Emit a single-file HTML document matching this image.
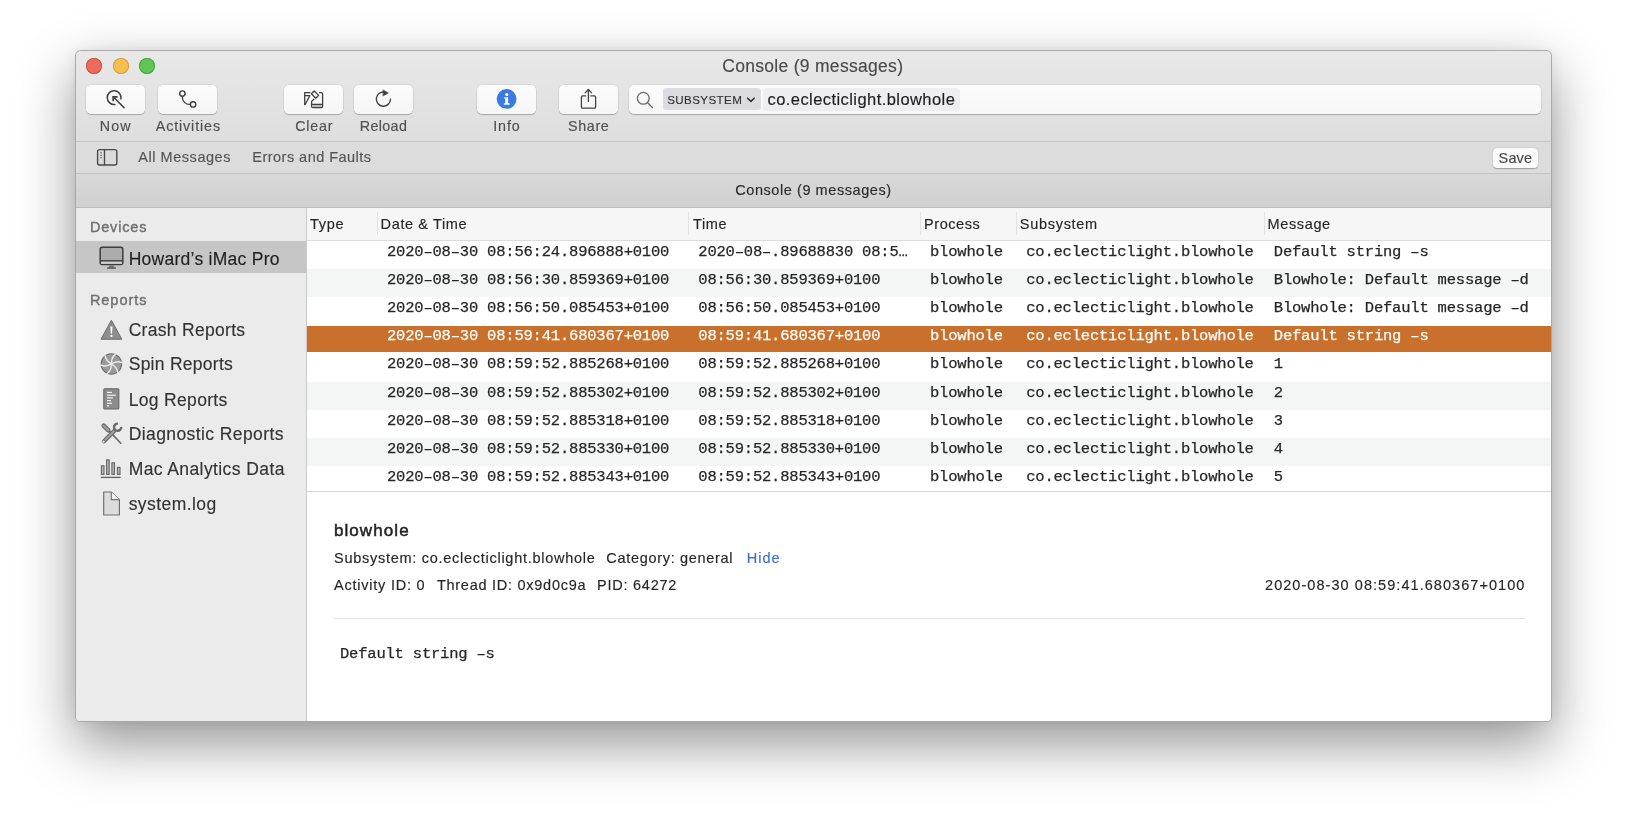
<!DOCTYPE html>
<html><head><meta charset="utf-8">
<style>
html,body{margin:0;padding:0;}
body{width:1627px;height:821px;background:#fff;position:relative;overflow:hidden;font-family:"Liberation Sans", sans-serif;}
.win{position:absolute;left:75px;top:50px;width:1477px;height:672px;box-sizing:border-box;border:1px solid rgba(0,0,0,0.28);border-radius:6px 6px 5px 5px;overflow:hidden;background:#ebebeb;
 box-shadow:0 22px 56px rgba(0,0,0,0.42), 0 0 14px rgba(0,0,0,0.06);}
.c{position:absolute;left:-76px;top:-51px;width:1627px;height:821px;}
.a{position:absolute;}
.t{position:absolute;line-height:1;white-space:pre;-webkit-text-stroke:0.15px currentColor;}
.m{-webkit-text-stroke:0.25px currentColor;}
.btn{position:absolute;top:85px;width:59px;height:29px;background:linear-gradient(#fbfbfb,#f6f6f6);border-radius:5px;box-shadow:0 1px 1px rgba(0,0,0,0.22),0 0 0 0.5px rgba(0,0,0,0.10);}
svg{position:absolute;overflow:visible;}
</style></head><body>
<div class="win"><div class="c">
 <!-- toolbar -->
 <div class="a" style="left:0;top:0;width:1627px;height:141px;background:linear-gradient(#e9e9e9 50px,#e6e6e6 70px,#dedede 141px);"></div>
 <div class="a" style="left:0;top:141px;width:1627px;height:1px;background:#c6c6c6;"></div>
 <div class="a" style="left:0;top:142px;width:1627px;height:31px;background:#dcdcdc;"></div>
 <div class="a" style="left:0;top:173px;width:1627px;height:1px;background:#c4c4c4;"></div>
 <div class="a" style="left:0;top:174px;width:1627px;height:33px;background:linear-gradient(#d8d8d8,#d1d1d1);"></div>
 <div class="a" style="left:0;top:207px;width:1627px;height:1px;background:#bdbdbd;"></div>
 <!-- sidebar -->
 <div class="a" style="left:0;top:208px;width:306px;height:620px;background:#ebebeb;"></div>
 <div class="a" style="left:76px;top:241px;width:230px;height:32px;background:#c6c6c6;"></div>
 <div class="a" style="left:306px;top:208px;width:1px;height:620px;background:#cbcbcb;"></div>
 <!-- table -->
 <div class="a" style="left:307px;top:208px;width:1330px;height:32px;background:#f6f6f6;"></div>
 <div class="a" style="left:307px;top:240px;width:1330px;height:1px;background:#dcdcdc;"></div>
 <div class="a" style="left:377px;top:212px;width:1px;height:23px;background:#e2e2e2;"></div>
 <div class="a" style="left:688px;top:212px;width:1px;height:23px;background:#e2e2e2;"></div>
 <div class="a" style="left:920px;top:212px;width:1px;height:23px;background:#e2e2e2;"></div>
 <div class="a" style="left:1016px;top:212px;width:1px;height:23px;background:#e2e2e2;"></div>
 <div class="a" style="left:1264px;top:212px;width:1px;height:23px;background:#e2e2e2;"></div>
 <div class="a" style="left:307px;top:241px;width:1330px;height:251px;background:#fff;"></div>
 <div class="a" style="left:307px;top:269.1px;width:1330px;height:28.1px;background:#f4f5f5;"></div>
 <div class="a" style="left:307px;top:381.5px;width:1330px;height:28.1px;background:#f4f5f5;"></div>
 <div class="a" style="left:307px;top:437.7px;width:1330px;height:28.1px;background:#f4f5f5;"></div>
 <div class="a" style="left:307px;top:325.6px;width:1330px;height:26.3px;background:#c8702c;"></div>
 <div class="a" style="left:307px;top:491px;width:1330px;height:1px;background:#d6d6d6;"></div>
 <!-- detail -->
 <div class="a" style="left:307px;top:492px;width:1330px;height:340px;background:#fff;"></div>
 <div class="a" style="left:334px;top:618px;width:1191px;height:1px;background:#e3e3e3;"></div>

 <!-- traffic lights -->
 <div class="a" style="left:86px;top:57.7px;width:16px;height:16px;border-radius:50%;background:#ed6a5e;box-shadow:inset 0 0 0 0.8px rgba(190,60,50,0.75);"></div>
 <div class="a" style="left:112.6px;top:57.7px;width:16px;height:16px;border-radius:50%;background:#f5bf4f;box-shadow:inset 0 0 0 0.8px rgba(200,140,40,0.75);"></div>
 <div class="a" style="left:139.4px;top:57.7px;width:16px;height:16px;border-radius:50%;background:#61c454;box-shadow:inset 0 0 0 0.8px rgba(50,150,45,0.75);"></div>

 <!-- toolbar buttons -->
 <div class="btn" style="left:86px;"></div>
 <div class="btn" style="left:158px;"></div>
 <div class="btn" style="left:284px;"></div>
 <div class="btn" style="left:354px;"></div>
 <div class="btn" style="left:477px;"></div>
 <div class="btn" style="left:559px;"></div>
 <!-- search field -->
 <div class="a" style="left:629px;top:85px;width:912px;height:29px;background:linear-gradient(#fbfbfb,#f7f7f7);border-radius:5px;box-shadow:0 1px 1px rgba(0,0,0,0.22),0 0 0 0.5px rgba(0,0,0,0.10);"></div>
 <div class="a" style="left:663px;top:88px;width:98px;height:21.5px;background:#dcdce0;border-radius:3px;"></div>
 <div class="a" style="left:763px;top:88px;width:197px;height:22.5px;background:#eeeef1;border-radius:3px;"></div>
 <!-- save -->
 <div class="a" style="left:1493px;top:147.5px;width:45px;height:20px;background:#fafafa;border-radius:4px;box-shadow:0 0.5px 1px rgba(0,0,0,0.25),0 0 0 0.5px rgba(0,0,0,0.08);"></div>

 <!-- icons -->
 <svg style="left:0;top:0" width="1627" height="821" viewBox="0 0 1627 821">
  <g fill="none" stroke="#404040" stroke-width="1.5" stroke-linecap="round" stroke-linejoin="round">
   <!-- now -->
   <path d="M120.9 98.9 A6.9 6.9 0 1 0 115 104.5"/>
   <path d="M124 107.6 L113.2 96.8"/>
   <path d="M113.2 101.2 L113.2 96.8 L117.6 96.8" stroke-linecap="butt" stroke-width="1.7"/>
   <!-- activities -->
   <circle cx="182.4" cy="93.6" r="2.7" stroke-width="1.4"/>
   <circle cx="193.1" cy="104.4" r="2.7" stroke-width="1.4"/>
   <path d="M182.4 96.3 V97.4 A7 7 0 0 0 189.4 104.4 H190.4" stroke-width="1.3"/>
   <!-- clear -->
   <path d="M304.7 92.7 H309.8 M304.7 92.7 V104.6" stroke-width="1.3"/>
   <path d="M304.8 95.7 H309.8 L305 104.6" stroke-width="1.3"/>
   <path d="M314.2 91 L318.6 95.4 L315.8 98.2 L311.4 93.8 Z" stroke-width="1.3"/>
   <path d="M319.6 92.6 H321.4 Q322.6 92.6 322.6 93.8 V106.3 Q322.6 107.5 321.4 107.5 H312.8 Q311.6 107.5 311.6 106.3 V101.4 L313.9 99.2" stroke-width="1.3"/>
   <rect x="312.3" y="104.9" width="9.6" height="2" fill="#b9b9b9" stroke="none"/>
   <path d="M311.8 104.4 H322.4" stroke-width="1.2"/>
   <!-- reload -->
   <path d="M384.4 92.1 A7.1 7.1 0 1 0 390.5 99.3" stroke-width="1.4"/>
   <path d="M383.2 89.9 L388.4 92.9 L383.2 95.9 Z" fill="#404040" stroke-width="0.5"/>
   <!-- share -->
   <path d="M585.6 95.9 H582.6 Q581.4 95.9 581.4 97.1 V106.9 Q581.4 108.1 582.6 108.1 H594.4 Q595.6 108.1 595.6 106.9 V97.1 Q595.6 95.9 594.4 95.9 H590.8" stroke-width="1.3" stroke="#444"/>
   <path d="M588.4 89.6 V101.4" stroke-width="1.3" stroke="#444"/>
   <path d="M585.2 92.9 L588.4 89.5 L591.6 92.9" stroke-width="1.3" stroke="#444"/>
   <!-- search magnifier -->
   <circle cx="643.3" cy="98.3" r="5.9" stroke="#6d6d6d" stroke-width="1.3"/>
   <path d="M647.6 102.7 L652.4 107.4" stroke="#6d6d6d" stroke-width="1.4"/>
   <!-- chevron -->
   <path d="M747.6 98.2 L750.9 101.4 L754.2 98.2" stroke="#333" stroke-width="1.6"/>
   <!-- sidebar toggle -->
   <rect x="97.6" y="149.6" width="19.2" height="15.4" rx="2" stroke="#4a4a4a" stroke-width="1.4"/>
   <path d="M104.5 150 V164.6" stroke="#4a4a4a" stroke-width="1.4"/>
   <path d="M100.2 152.8 H102 M100.2 155.3 H102 M100.2 157.8 H102" stroke="#6a6a6a" stroke-width="1" stroke-linecap="butt"/>
  </g>
  <!-- info -->
  <circle cx="506.6" cy="98.9" r="9.9" fill="#3a7be3"/>
  <circle cx="506.8" cy="94.5" r="1.6" fill="#fff"/>
  <path d="M504.2 97.2 H508.1 V103.3 H509.6 V104.8 H503.9 V103.3 H505.3 V98.6 H504.2 Z" fill="#fff"/>

  <!-- sidebar icons -->
  <!-- iMac -->
  <rect x="100.2" y="247.3" width="22.6" height="17.2" rx="2" fill="#acacac" stroke="#3d3d3d" stroke-width="1.5"/>
  <rect x="101" y="261.4" width="21" height="2.4" fill="#d2d2d2"/>
  <path d="M100.4 260.8 H122.6" stroke="#3d3d3d" stroke-width="1.4"/>
  <path d="M109.4 265.2 L108.8 267.2 H114.2 L113.6 265.2 Z" fill="#777"/>
  <path d="M107.2 268 H115.8" stroke="#3d3d3d" stroke-width="1.3"/>
  <!-- crash -->
  <path d="M111.4 320.3 L121.8 339.2 H101 Z" fill="#8e8e8e" stroke="#6a6a6a" stroke-width="1" stroke-linejoin="round"/>
  <path d="M110.3 326.5 H112.5 L112 333.4 H110.8 Z" fill="#fff"/>
  <circle cx="111.4" cy="335.9" r="1.15" fill="#fff"/>
  <!-- spin -->
  <g transform="translate(111.4 363.9)">
   <circle r="10.2" fill="#9a9a9a" stroke="#6c6c6c" stroke-width="1.1"/>
   <g fill="none" stroke="#ebebeb" stroke-width="1.4" stroke-linecap="round">
    <path d="M0.3 0.2 Q-0.6 -6 4.2 -9.8"/>
    <path d="M0.3 0.2 Q-0.6 -6 4.2 -9.8" transform="rotate(60)"/>
    <path d="M0.3 0.2 Q-0.6 -6 4.2 -9.8" transform="rotate(120)"/>
    <path d="M0.3 0.2 Q-0.6 -6 4.2 -9.8" transform="rotate(180)"/>
    <path d="M0.3 0.2 Q-0.6 -6 4.2 -9.8" transform="rotate(240)"/>
    <path d="M0.3 0.2 Q-0.6 -6 4.2 -9.8" transform="rotate(300)"/>
   </g>
  </g>
  <!-- log reports -->
  <rect x="103.8" y="388.8" width="15" height="20.2" rx="1" fill="#8c8c8c" stroke="#666" stroke-width="1.1"/>
  <g stroke="#f2f2f2" stroke-width="1.2">
   <path d="M107 392.4 H112"/><path d="M107 395.2 H115.8"/><path d="M107 397.9 H113"/><path d="M107 400.6 H111"/><path d="M107 403.3 H112"/><path d="M107 405.8 H109"/>
  </g>
  <!-- diagnostic (wrench + screwdriver) -->
  <g fill="none" stroke-linecap="round">
   <path d="M109.6 431.4 L120.8 443.2" stroke="#6a6a6a" stroke-width="1.6"/>
   <path d="M103.6 425.6 L108.4 430.4" stroke="#6a6a6a" stroke-width="4.4"/>
   <path d="M103.6 425.6 L108.4 430.4" stroke="#a5a5a5" stroke-width="2"/>
   <path d="M104 441.2 L114.2 431" stroke="#6a6a6a" stroke-width="4.2"/>
   <path d="M105.5 439.7 L114 431.2" stroke="#a5a5a5" stroke-width="1.8"/>
   <path d="M121.2 426.9 A3.6 3.6 0 1 1 117.9 423.6" stroke="#6a6a6a" stroke-width="2.4" stroke-linecap="butt"/>
  </g>
  <circle cx="103.6" cy="441.6" r="1.1" fill="#f4f4f4"/>
  <!-- analytics -->
  <g fill="#b4b4b4" stroke="#666" stroke-width="1.1">
   <rect x="101.4" y="465.8" width="2.6" height="8.6"/>
   <rect x="106.6" y="459.9" width="2.6" height="14.5"/>
   <rect x="111.9" y="462.8" width="2.6" height="11.6"/>
   <rect x="117.4" y="467.4" width="2.6" height="7"/>
  </g>
  <path d="M100.8 477.4 H120.6" stroke="#5e5e5e" stroke-width="1.3"/>
  <!-- system.log -->
  <path d="M103.7 492 H111.3 L119.4 499.6 V515 H103.7 Z" fill="#dcdcdc" stroke="#707070" stroke-width="1.2" stroke-linejoin="round"/>
  <path d="M111.3 492 V499.6 H119.4" fill="#f2f2f2" stroke="#707070" stroke-width="1.1"/>
 </svg>

<div style="position:absolute;left:0;top:0;width:1627px;height:821px;will-change:transform;">
<div class='t' style='left:722.20px;top:58.00px;font-size:17.5px;color:#4a4a4a;letter-spacing:0.301px;'>Console (9 messages)</div>
<div class='t' style='left:99.78px;top:119.00px;font-size:14.3px;color:#4f4f4f;letter-spacing:1.117px;'>Now</div>
<div class='t' style='left:155.73px;top:119.00px;font-size:14.3px;color:#4f4f4f;letter-spacing:0.882px;'>Activities</div>
<div class='t' style='left:295.18px;top:119.00px;font-size:14.3px;color:#4f4f4f;letter-spacing:0.768px;'>Clear</div>
<div class='t' style='left:359.73px;top:119.00px;font-size:14.3px;color:#4f4f4f;letter-spacing:0.366px;'>Reload</div>
<div class='t' style='left:493.23px;top:119.00px;font-size:14.3px;color:#4f4f4f;letter-spacing:0.895px;'>Info</div>
<div class='t' style='left:568.03px;top:119.00px;font-size:14.3px;color:#4f4f4f;letter-spacing:0.647px;'>Share</div>
<div class='t' style='left:138.32px;top:150.00px;font-size:14.5px;color:#555;letter-spacing:0.539px;'>All Messages</div>
<div class='t' style='left:252.32px;top:150.00px;font-size:14.5px;color:#555;letter-spacing:0.471px;'>Errors and Faults</div>
<div class='t' style='left:1498.62px;top:151.00px;font-size:14.5px;color:#4a4a4a;letter-spacing:0.099px;'>Save</div>
<div class='t' style='left:735.22px;top:183.00px;font-size:14.5px;color:#2b2b2b;letter-spacing:0.567px;'>Console (9 messages)</div>
<div class='t' style='left:667.24px;top:94.00px;font-size:11.6px;color:#333;letter-spacing:0.389px;'>SUBSYSTEM</div>
<div class='t' style='left:767.54px;top:91.00px;font-size:16.5px;color:#1e1e1e;letter-spacing:0.429px;'>co.eclecticlight.blowhole</div>
<div class='t' style='left:89.92px;top:220.00px;font-size:14.5px;color:#6f6f6f;letter-spacing:0.830px;-webkit-text-stroke:0.4px #6f6f6f;'>Devices</div>
<div class='t' style='left:89.92px;top:293.00px;font-size:14.5px;color:#6f6f6f;letter-spacing:0.963px;-webkit-text-stroke:0.4px #6f6f6f;'>Reports</div>
<div class='t' style='left:128.70px;top:251.00px;font-size:17.5px;color:#1f1f1f;letter-spacing:0.267px;'>Howard’s iMac Pro</div>
<div class='t' style='left:128.70px;top:322.00px;font-size:17.5px;color:#333;letter-spacing:0.298px;'>Crash Reports</div>
<div class='t' style='left:128.70px;top:356.00px;font-size:17.5px;color:#333;letter-spacing:0.266px;'>Spin Reports</div>
<div class='t' style='left:128.70px;top:392.00px;font-size:17.5px;color:#333;letter-spacing:0.326px;'>Log Reports</div>
<div class='t' style='left:128.70px;top:426.00px;font-size:17.5px;color:#333;letter-spacing:0.408px;'>Diagnostic Reports</div>
<div class='t' style='left:128.70px;top:461.00px;font-size:17.5px;color:#333;letter-spacing:0.405px;'>Mac Analytics Data</div>
<div class='t' style='left:128.70px;top:496.00px;font-size:17.5px;color:#333;letter-spacing:0.429px;'>system.log</div>
<div class='t' style='left:309.92px;top:217.00px;font-size:14.5px;color:#262626;letter-spacing:0.774px;'>Type</div>
<div class='t' style='left:380.62px;top:217.00px;font-size:14.5px;color:#262626;letter-spacing:0.618px;'>Date &amp; Time</div>
<div class='t' style='left:692.92px;top:217.00px;font-size:14.5px;color:#262626;letter-spacing:0.658px;'>Time</div>
<div class='t' style='left:924.02px;top:217.00px;font-size:14.5px;color:#262626;letter-spacing:0.562px;'>Process</div>
<div class='t' style='left:1019.82px;top:217.00px;font-size:14.5px;color:#262626;letter-spacing:0.703px;'>Subsystem</div>
<div class='t' style='left:1267.52px;top:217.00px;font-size:14.5px;color:#262626;letter-spacing:0.636px;'>Message</div>
<div class='t m' style='left:387.00px;top:245.00px;font-size:15.5px;color:#262626;font-family:"Liberation Mono", monospace;letter-spacing:-0.200px;'>2020–08–30 08:56:24.896888+0100</div>
<div class='t m' style='left:698.30px;top:245.00px;font-size:15.5px;color:#262626;font-family:"Liberation Mono", monospace;letter-spacing:-0.200px;'>2020–08–.89688830 08:5…</div>
<div class='t m' style='left:930.00px;top:245.00px;font-size:15.5px;color:#262626;font-family:"Liberation Mono", monospace;letter-spacing:-0.200px;'>blowhole</div>
<div class='t m' style='left:1026.20px;top:245.00px;font-size:15.5px;color:#262626;font-family:"Liberation Mono", monospace;letter-spacing:-0.200px;'>co.eclecticlight.blowhole</div>
<div class='t m' style='left:1273.80px;top:245.00px;font-size:15.5px;color:#262626;font-family:"Liberation Mono", monospace;letter-spacing:-0.200px;'>Default string –s</div>
<div class='t m' style='left:387.00px;top:273.00px;font-size:15.5px;color:#262626;font-family:"Liberation Mono", monospace;letter-spacing:-0.200px;'>2020–08–30 08:56:30.859369+0100</div>
<div class='t m' style='left:698.30px;top:273.00px;font-size:15.5px;color:#262626;font-family:"Liberation Mono", monospace;letter-spacing:-0.200px;'>08:56:30.859369+0100</div>
<div class='t m' style='left:930.00px;top:273.00px;font-size:15.5px;color:#262626;font-family:"Liberation Mono", monospace;letter-spacing:-0.200px;'>blowhole</div>
<div class='t m' style='left:1026.20px;top:273.00px;font-size:15.5px;color:#262626;font-family:"Liberation Mono", monospace;letter-spacing:-0.200px;'>co.eclecticlight.blowhole</div>
<div class='t m' style='left:1273.80px;top:273.00px;font-size:15.5px;color:#262626;font-family:"Liberation Mono", monospace;letter-spacing:-0.200px;'>Blowhole: Default message –d</div>
<div class='t m' style='left:387.00px;top:301.00px;font-size:15.5px;color:#262626;font-family:"Liberation Mono", monospace;letter-spacing:-0.200px;'>2020–08–30 08:56:50.085453+0100</div>
<div class='t m' style='left:698.30px;top:301.00px;font-size:15.5px;color:#262626;font-family:"Liberation Mono", monospace;letter-spacing:-0.200px;'>08:56:50.085453+0100</div>
<div class='t m' style='left:930.00px;top:301.00px;font-size:15.5px;color:#262626;font-family:"Liberation Mono", monospace;letter-spacing:-0.200px;'>blowhole</div>
<div class='t m' style='left:1026.20px;top:301.00px;font-size:15.5px;color:#262626;font-family:"Liberation Mono", monospace;letter-spacing:-0.200px;'>co.eclecticlight.blowhole</div>
<div class='t m' style='left:1273.80px;top:301.00px;font-size:15.5px;color:#262626;font-family:"Liberation Mono", monospace;letter-spacing:-0.200px;'>Blowhole: Default message –d</div>
<div class='t m' style='left:387.00px;top:329.00px;font-size:15.5px;color:#fff;font-family:"Liberation Mono", monospace;letter-spacing:-0.200px;'>2020–08–30 08:59:41.680367+0100</div>
<div class='t m' style='left:698.30px;top:329.00px;font-size:15.5px;color:#fff;font-family:"Liberation Mono", monospace;letter-spacing:-0.200px;'>08:59:41.680367+0100</div>
<div class='t m' style='left:930.00px;top:329.00px;font-size:15.5px;color:#fff;font-family:"Liberation Mono", monospace;letter-spacing:-0.200px;'>blowhole</div>
<div class='t m' style='left:1026.20px;top:329.00px;font-size:15.5px;color:#fff;font-family:"Liberation Mono", monospace;letter-spacing:-0.200px;'>co.eclecticlight.blowhole</div>
<div class='t m' style='left:1273.80px;top:329.00px;font-size:15.5px;color:#fff;font-family:"Liberation Mono", monospace;letter-spacing:-0.200px;'>Default string –s</div>
<div class='t m' style='left:387.00px;top:357.00px;font-size:15.5px;color:#262626;font-family:"Liberation Mono", monospace;letter-spacing:-0.200px;'>2020–08–30 08:59:52.885268+0100</div>
<div class='t m' style='left:698.30px;top:357.00px;font-size:15.5px;color:#262626;font-family:"Liberation Mono", monospace;letter-spacing:-0.200px;'>08:59:52.885268+0100</div>
<div class='t m' style='left:930.00px;top:357.00px;font-size:15.5px;color:#262626;font-family:"Liberation Mono", monospace;letter-spacing:-0.200px;'>blowhole</div>
<div class='t m' style='left:1026.20px;top:357.00px;font-size:15.5px;color:#262626;font-family:"Liberation Mono", monospace;letter-spacing:-0.200px;'>co.eclecticlight.blowhole</div>
<div class='t m' style='left:1273.80px;top:357.00px;font-size:15.5px;color:#262626;font-family:"Liberation Mono", monospace;letter-spacing:-0.200px;'>1</div>
<div class='t m' style='left:387.00px;top:386.00px;font-size:15.5px;color:#262626;font-family:"Liberation Mono", monospace;letter-spacing:-0.200px;'>2020–08–30 08:59:52.885302+0100</div>
<div class='t m' style='left:698.30px;top:386.00px;font-size:15.5px;color:#262626;font-family:"Liberation Mono", monospace;letter-spacing:-0.200px;'>08:59:52.885302+0100</div>
<div class='t m' style='left:930.00px;top:386.00px;font-size:15.5px;color:#262626;font-family:"Liberation Mono", monospace;letter-spacing:-0.200px;'>blowhole</div>
<div class='t m' style='left:1026.20px;top:386.00px;font-size:15.5px;color:#262626;font-family:"Liberation Mono", monospace;letter-spacing:-0.200px;'>co.eclecticlight.blowhole</div>
<div class='t m' style='left:1273.80px;top:386.00px;font-size:15.5px;color:#262626;font-family:"Liberation Mono", monospace;letter-spacing:-0.200px;'>2</div>
<div class='t m' style='left:387.00px;top:414.00px;font-size:15.5px;color:#262626;font-family:"Liberation Mono", monospace;letter-spacing:-0.200px;'>2020–08–30 08:59:52.885318+0100</div>
<div class='t m' style='left:698.30px;top:414.00px;font-size:15.5px;color:#262626;font-family:"Liberation Mono", monospace;letter-spacing:-0.200px;'>08:59:52.885318+0100</div>
<div class='t m' style='left:930.00px;top:414.00px;font-size:15.5px;color:#262626;font-family:"Liberation Mono", monospace;letter-spacing:-0.200px;'>blowhole</div>
<div class='t m' style='left:1026.20px;top:414.00px;font-size:15.5px;color:#262626;font-family:"Liberation Mono", monospace;letter-spacing:-0.200px;'>co.eclecticlight.blowhole</div>
<div class='t m' style='left:1273.80px;top:414.00px;font-size:15.5px;color:#262626;font-family:"Liberation Mono", monospace;letter-spacing:-0.200px;'>3</div>
<div class='t m' style='left:387.00px;top:442.00px;font-size:15.5px;color:#262626;font-family:"Liberation Mono", monospace;letter-spacing:-0.200px;'>2020–08–30 08:59:52.885330+0100</div>
<div class='t m' style='left:698.30px;top:442.00px;font-size:15.5px;color:#262626;font-family:"Liberation Mono", monospace;letter-spacing:-0.200px;'>08:59:52.885330+0100</div>
<div class='t m' style='left:930.00px;top:442.00px;font-size:15.5px;color:#262626;font-family:"Liberation Mono", monospace;letter-spacing:-0.200px;'>blowhole</div>
<div class='t m' style='left:1026.20px;top:442.00px;font-size:15.5px;color:#262626;font-family:"Liberation Mono", monospace;letter-spacing:-0.200px;'>co.eclecticlight.blowhole</div>
<div class='t m' style='left:1273.80px;top:442.00px;font-size:15.5px;color:#262626;font-family:"Liberation Mono", monospace;letter-spacing:-0.200px;'>4</div>
<div class='t m' style='left:387.00px;top:470.00px;font-size:15.5px;color:#262626;font-family:"Liberation Mono", monospace;letter-spacing:-0.200px;'>2020–08–30 08:59:52.885343+0100</div>
<div class='t m' style='left:698.30px;top:470.00px;font-size:15.5px;color:#262626;font-family:"Liberation Mono", monospace;letter-spacing:-0.200px;'>08:59:52.885343+0100</div>
<div class='t m' style='left:930.00px;top:470.00px;font-size:15.5px;color:#262626;font-family:"Liberation Mono", monospace;letter-spacing:-0.200px;'>blowhole</div>
<div class='t m' style='left:1026.20px;top:470.00px;font-size:15.5px;color:#262626;font-family:"Liberation Mono", monospace;letter-spacing:-0.200px;'>co.eclecticlight.blowhole</div>
<div class='t m' style='left:1273.80px;top:470.00px;font-size:15.5px;color:#262626;font-family:"Liberation Mono", monospace;letter-spacing:-0.200px;'>5</div>
<div class='t' style='left:333.92px;top:522.00px;font-size:17.0px;color:#222;letter-spacing:1.093px;-webkit-text-stroke:0.5px #222;'>blowhole</div>
<div class='t' style='left:334.02px;top:551.00px;font-size:14.5px;color:#262626;letter-spacing:0.726px;'>Subsystem: co.eclecticlight.blowhole</div>
<div class='t' style='left:606.32px;top:551.00px;font-size:14.5px;color:#262626;letter-spacing:0.687px;'>Category: general</div>
<div class='t' style='left:746.82px;top:551.00px;font-size:14.5px;color:#3d6fd6;letter-spacing:0.977px;'>Hide</div>
<div class='t' style='left:334.02px;top:578.00px;font-size:14.5px;color:#262626;letter-spacing:0.776px;'>Activity ID: 0</div>
<div class='t' style='left:436.92px;top:578.00px;font-size:14.5px;color:#262626;letter-spacing:0.735px;'>Thread ID: 0x9d0c9a</div>
<div class='t' style='left:597.02px;top:578.00px;font-size:14.5px;color:#262626;letter-spacing:0.755px;'>PID: 64272</div>
<div class='t' style='left:1265.02px;top:578.00px;font-size:14.5px;color:#262626;letter-spacing:1.053px;'>2020-08-30 08:59:41.680367+0100</div>
<div class='t m' style='left:340.00px;top:647.00px;font-size:15.5px;color:#262626;font-family:"Liberation Mono", monospace;letter-spacing:-0.200px;'>Default string –s</div>
</div>
</div></div>
</body></html>
